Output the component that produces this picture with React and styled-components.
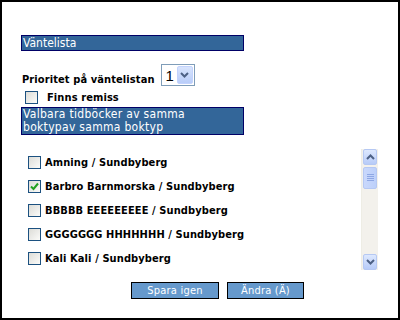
import React from 'react'
import styled, { createGlobalStyle } from 'styled-components'

const GlobalStyle = createGlobalStyle`
    html, body {
        margin: 0;
        padding: 0;
        background: #fff;
    }
    * {
        box-sizing: border-box;
    }
`

const items = [
    { name: 'Amning / Sundbyberg', checked: false },
    { name: 'Barbro Barnmorska / Sundbyberg', checked: true },
    { name: 'BBBBB EEEEEEEEE / Sundbyberg', checked: false },
    { name: 'GGGGGGG HHHHHHH / Sundbyberg', checked: false },
    { name: 'Kali Kali / Sundbyberg', checked: false },
]

function CheckBox({ checked }) {
    return (
        <Box>
            {checked && (
                <svg width="9" height="9" viewBox="0 0 9 9">
                    <path d="M1 4.5 L3.5 7 L8 1.5" fill="none" stroke="#21a121" strokeWidth="2" />
                </svg>
            )}
        </Box>
    )
}

function App() {
    return (
        <>
        <GlobalStyle />
        <Window>
            <TitleBar>Väntelista</TitleBar>
            <PriorityRow>
                <Label>Prioritet på väntelistan</Label>
                <Select>
                    <SelectValue>1</SelectValue>
                    <DropButton>
                        <svg width="9" height="6" viewBox="0 0 9 6">
                            <path d="M1 1 L4.5 4.5 L8 1" fill="none" stroke="#4d6185" strokeWidth="2" />
                        </svg>
                    </DropButton>
                </Select>
            </PriorityRow>
            <RemissRow>
                <CheckBox />
                <Label>Finns remiss</Label>
            </RemissRow>
            <InfoBox>Valbara tidböcker av samma<br />boktypav samma boktyp</InfoBox>
            <ListArea>
                <List>
                    {items.map(item => (
                        <Row key={item.name}>
                            <CheckBox checked={item.checked} />
                            <Label>{item.name}</Label>
                        </Row>
                    ))}
                </List>
                <ScrollBar>
                    <ScrollButton>
                        <svg width="9" height="6" viewBox="0 0 9 6">
                            <path d="M1 5 L4.5 1.5 L8 5" fill="none" stroke="#4d6185" strokeWidth="2" />
                        </svg>
                    </ScrollButton>
                    <Thumb>
                        <svg width="7" height="8" viewBox="0 0 7 8">
                            <path d="M0 0.5 H7 M0 2.5 H7 M0 4.5 H7 M0 6.5 H7" stroke="#8ea7e4" strokeWidth="1" />
                        </svg>
                    </Thumb>
                    <Track />
                    <ScrollButton>
                        <svg width="9" height="6" viewBox="0 0 9 6">
                            <path d="M1 1 L4.5 4.5 L8 1" fill="none" stroke="#4d6185" strokeWidth="2" />
                        </svg>
                    </ScrollButton>
                </ScrollBar>
            </ListArea>
            <Buttons>
                <Button $width={88}>Spara igen</Button>
                <Button $width={77}>Ändra (Ä)</Button>
            </Buttons>
        </Window>
        </>
    )
}

export default App

const font = `Tahoma, "DejaVu Sans Condensed", "DejaVu Sans", sans-serif`

const Window = styled.div`
    width: 400px;
    height: 320px;
    border: 2px solid #000;
    padding: 33px 20px 0 19px;
    display: flex;
    flex-direction: column;
    font-family: ${font};
    overflow: hidden;
`

const TitleBar = styled.div`
    width: 223px;
    height: 16px;
    background: #336699;
    border: 1px solid #000066;
    color: #fff;
    font-size: 12px;
    line-height: 14px;
    padding-left: 1px;
`

const PriorityRow = styled.div`
    display: flex;
    align-items: flex-end;
    gap: 6px;
    margin-top: 13px;
    padding-left: 1px;
`

const Label = styled.span`
    font-size: 11px;
    font-weight: bold;
    color: #000;
    white-space: nowrap;
    letter-spacing: 0.1px;
`

const Select = styled.div`
    width: 34px;
    height: 22px;
    border: 1px solid #7f9db9;
    background: #fff;
    display: flex;
    align-items: center;
    padding: 1px;
`

const SelectValue = styled.span`
    flex: 1;
    font-family: "Liberation Sans", Arial, sans-serif;
    font-size: 15px;
    padding-left: 3px;
    color: #000;
`

const DropButton = styled.div`
    width: 16px;
    height: 18px;
    background: linear-gradient(#d8e4fd, #b9cdf9);
    border: 1px solid #c3d3fd;
    border-radius: 2px;
    display: flex;
    align-items: center;
    justify-content: center;
`

const RemissRow = styled.div`
    display: flex;
    align-items: center;
    gap: 9px;
    margin-top: 5px;
    padding-left: 4px;
`

const Box = styled.span`
    width: 13px;
    height: 13px;
    border: 1px solid #1c5180;
    background: linear-gradient(135deg, #dcdcd7, #fbfbf9);
    display: flex;
    align-items: center;
    justify-content: center;
    flex-shrink: 0;
`

const InfoBox = styled.div`
    width: 223px;
    height: 28px;
    margin-top: 3px;
    background: #336699;
    border: 1px solid #000066;
    color: #fff;
    font-size: 12px;
    line-height: 13px;
    padding-left: 1px;
    letter-spacing: 0.3px;
`

const ListArea = styled.div`
    display: flex;
    margin-top: 14px;
    height: 121px;
`

const List = styled.div`
    flex: 1;
    display: flex;
    flex-direction: column;
    gap: 11px;
    padding: 7px 0 0 7px;
`

const Row = styled.div`
    display: flex;
    align-items: center;
    gap: 4px;
    height: 13px;
`

const ScrollBar = styled.div`
    width: 17px;
    display: flex;
    flex-direction: column;
    background: #f3f1ec;
    border-left: 1px solid #eeede5;
    padding: 0 1px;
`

const ScrollButton = styled.div`
    height: 16px;
    background: linear-gradient(#dde8fe, #b7cbf8);
    border: 1px solid #b5c8f3;
    border-radius: 2px;
    display: flex;
    align-items: center;
    justify-content: center;
`

const Thumb = styled(ScrollButton)`
    height: 22px;
    margin-top: 2px;
    background: linear-gradient(90deg, #c9d8fc, #bdd0fa);
`

const Track = styled.div`
    flex: 1;
`

const Buttons = styled.div`
    display: flex;
    gap: 8px;
    margin-top: 12px;
    padding-left: 110px;
`

const Button = styled.button`
    width: ${p => p.$width}px;
    height: 17px;
    background: #6699cc;
    border: 1px solid #000;
    color: #fff;
    font-family: ${font};
    font-size: 11px;
    padding: 0;
    line-height: 14px;
    letter-spacing: 0.2px;
`
